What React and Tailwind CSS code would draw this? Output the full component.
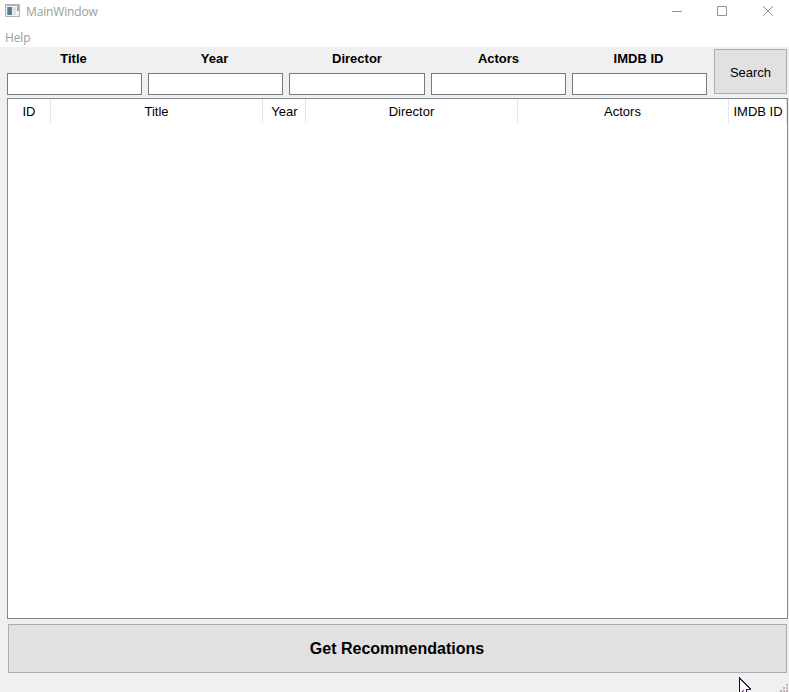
const fields = [
  { label: "Title", width: "w-[135px]", inset: "pr-0.5" },
  { label: "Year", width: "w-[135px]", inset: "pr-0.5" },
  { label: "Director", width: "w-[136px]", inset: "pr-0" },
  { label: "Actors", width: "w-[135px]", inset: "pr-0" },
  { label: "IMDB ID", width: "w-[135px]", inset: "pr-0.5" },
];

const columns = [
  { label: "ID", width: "w-[43px]" },
  { label: "Title", width: "w-[212px]" },
  { label: "Year", width: "w-[43px] pl-px" },
  { label: "Director", width: "w-[212px]" },
  { label: "Actors", width: "w-[211px] pr-px" },
  { label: "IMDB ID", width: "w-[58px] pl-px" },
];

function TitleBar() {
  return (
    <header className="flex h-6 items-start bg-white font-['Open_Sans',sans-serif] text-xs text-[#99a09b]">
      <svg className="mt-1 ml-[5px] h-[14px] w-[15px] shrink-0" viewBox="0 0 15 14" shapeRendering="crispEdges">
        <rect width="15" height="13" fill="#b3b3b8" />
        <rect x="1" y="2" width="13" height="10" fill="#f1f3f5" />
        <rect x="2" y="3" width="5" height="8" fill="#557d91" />
        <rect x="2" y="3" width="1" height="8" fill="#7c9eae" />
        <rect x="8" y="3" width="3" height="8" fill="#dfe2e5" />
        <rect x="12" y="2" width="2" height="5" fill="#a9a6b0" />
      </svg>
      <span className="mt-1 ml-1.5 leading-4 tracking-[-0.16px]">MainWindow</span>
      <svg className="mt-[5px] mr-[15px] ml-auto h-3 w-[102px]" viewBox="0 0 102 12" fill="none" stroke="#8f9495">
        <path d="M0 6.5H10" />
        <path d="M45.5 1.5H54.5V10.5H45.5Z" />
        <path d="M91 1L101 11M101 1L91 11" />
      </svg>
    </header>
  );
}

export default function App() {
  return (
    <div className="flex h-[692px] w-[789px] flex-col overflow-hidden bg-[#f0f0f0] font-['Liberation_Sans',Arial,sans-serif] text-[13px] text-black">
      <TitleBar />
      <nav className="h-[23px] bg-white pt-1.5 pl-[5px] font-['Open_Sans',sans-serif] text-xs leading-4 tracking-[-0.16px] text-[#99a09b]">
        Help
      </nav>

      <section className="flex h-[51px] pt-0.5 pl-[7px]">
        <div className="flex gap-1.5">
          {fields.map(({ label, width, inset }) => (
            <label key={label} className={`flex flex-col ${width}`}>
              <span className={`h-6 pt-0.5 text-center leading-4 font-bold ${inset}`}>{label}</span>
              <input className="h-[22px] w-full border border-[#7a7a7a] bg-white px-1 outline-none" />
            </label>
          ))}
        </div>
        <button className="ml-[7px] h-[45px] w-[73px] border border-[#adadad] bg-[#e1e1e1] pt-0.5">Search</button>
      </section>

      <main className="ml-[7px] h-[521px] w-[781px] shrink-0 border border-[#828790] bg-white">
        <div className="flex h-6">
          {columns.map(({ label, width }) => (
            <div
              key={label}
              className={`flex shrink-0 items-center justify-center border-r border-[#e5e5e5] pt-0.5 whitespace-nowrap ${width}`}
            >
              {label}
            </div>
          ))}
        </div>
      </main>

      <button className="mt-[5px] ml-2 h-[49px] w-[779px] shrink-0 border border-[#adadad] bg-[#e1e1e1] pr-px text-base font-bold">
        Get Recommendations
      </button>

      <footer className="relative h-[19px] shrink-0">
        <svg className="absolute top-1 left-[739px] h-[15px] w-[13px]" viewBox="0 0 13 15" shapeRendering="crispEdges">
          <path d="M1 1L11 11V12H7L8 15H5L4 13L1 15Z" fill="#fff" />
          <path d="M0 0H1V15H0Z" fill="#160818" />
          <path d="M1 1h1v1h1v1h1v1h1v1h1v1h1v1h1v1h1v1h1v1h1v1h1v2H7v-1h3v-1h-1v-1h-1v-1h-1v-1h-1v-1h-1v-1h-1v-1h-1v-1h-1v-1h-1z" fill="#43204d" />
          <path d="M7 12h1v3h-1zM4 13h1v1h-1zM3 14h1v1h-1z" fill="#43204d" />
        </svg>
        <svg className="absolute top-[11px] left-[780px] h-2 w-[9px]" viewBox="0 0 9 8" fill="#bfb5b7" shapeRendering="crispEdges">
          <path d="M6 0h2v2h-2zM3 3h2v2h-2zM6 3h2v2h-2zM0 6h2v2h-2zM3 6h2v2h-2zM6 6h2v2h-2z" />
        </svg>
      </footer>
    </div>
  );
}
